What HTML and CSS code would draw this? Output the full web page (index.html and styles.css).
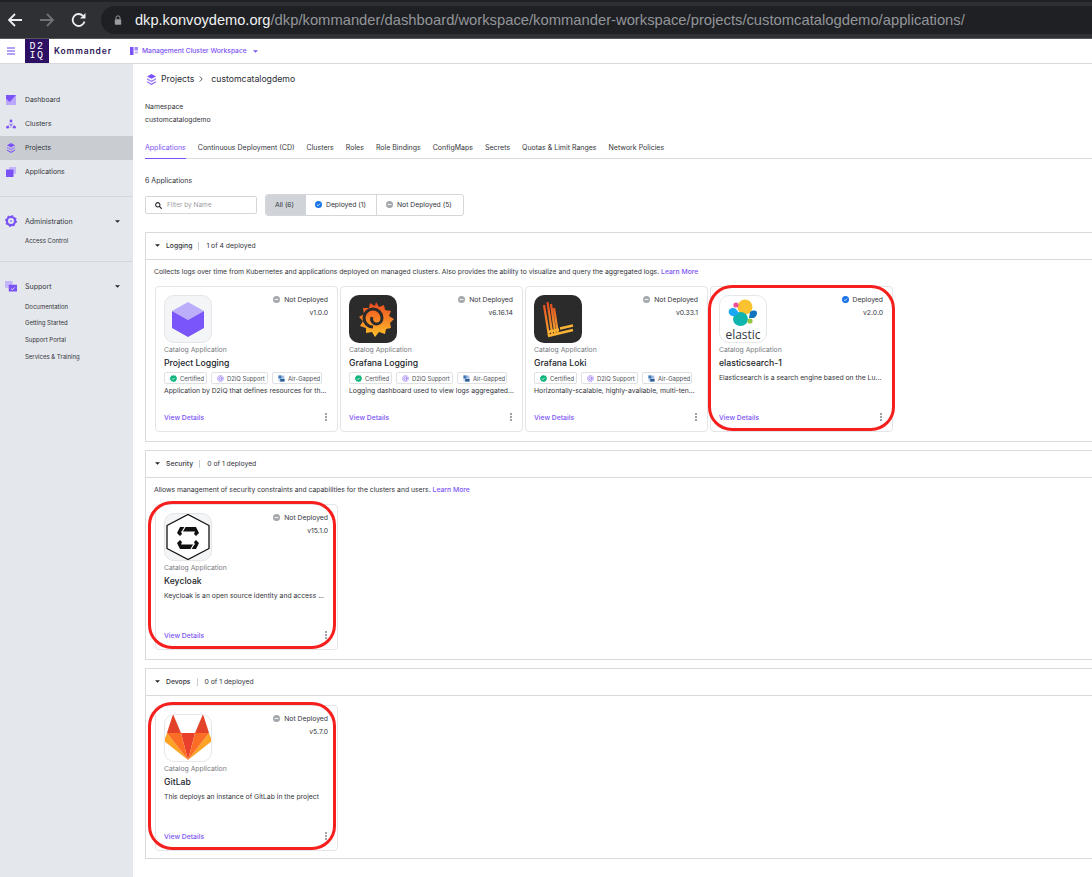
FILE: index.html
```html
<!DOCTYPE html>
<html lang="en">
<head>
<meta charset="utf-8">
<title>Kommander</title>
<link rel="stylesheet" href="styles.css">
</head>
<body>
<svg class="defs" width="0" height="0" aria-hidden="true">
  <symbol id="st-off" viewBox="0 0 16 16"><circle cx="8" cy="8" r="8" fill="#a3a6ab"/><rect x="3.5" y="6.6" width="9" height="2.8" fill="#e9eaec"/></symbol>
  <symbol id="st-on" viewBox="0 0 16 16"><circle cx="8" cy="8" r="8" fill="#1b74e8"/><path d="M4.5 8.4l2.5 2.4 4.6-5" fill="none" stroke="#fff" stroke-width="1.8"/></symbol>
  <symbol id="b-cert" viewBox="0 0 16 16"><path d="M8 0l2.300 1.500 2.800-.1 1 2.600 2 1.900L15 8.500l.6 2.600-2.200 1.600-1 2.600-2.800-.2L8 16l-2.300-1.500-2.600.1-1-2.500L0 10.500.8 8 0 5.400 2.100 4l1-2.600 2.600.1z" fill="#0cb37a"/><path d="M4.800 8.200l2.200 2.200 4-4.200" fill="none" stroke="#fff" stroke-width="1.800"/></symbol>
  <symbol id="b-sup" viewBox="0 0 16 16"><circle cx="8" cy="8" r="7" fill="none" stroke="#a78bfa" stroke-width="2" stroke-dasharray="2.500 1"/><circle cx="8" cy="8" r="4" fill="none" stroke="#7b52f5" stroke-width="1.700"/><path d="M8 8h4" stroke="#7b52f5" stroke-width="1.500"/></symbol>
  <symbol id="b-air" viewBox="0 0 16 16"><rect x="1" y="1" width="14" height="14" fill="#c6d6ee"/><rect x="1" y="1" width="7" height="7" fill="#3f78b5"/><path d="M5 15V9h10v6z" fill="#2b5d97"/><rect x="9" y="3" width="4" height="4" fill="#8fb2de"/></symbol>
  <symbol id="kebab" viewBox="0 0 4 8"><circle cx="2" cy="1" r=".8" fill="#2b2d33"/><circle cx="2" cy="4" r=".8" fill="#2b2d33"/><circle cx="2" cy="7" r=".8" fill="#2b2d33"/></symbol>
  <symbol id="caret" viewBox="0 0 8 4"><path d="M0 0h8L4 4z" fill="#22242a"/></symbol>
  <symbol id="layers" viewBox="0 0 16 16"><path d="M8 0l6.500 3.500L8 7 1.500 3.500z" fill="#7b52f5"/><path d="M1.500 5.800L8 9.300l6.500-3.500v2.700L8 12 1.500 8.500z" fill="#a58bf7"/><path d="M1.500 10.500L8 14l6.500-3.500V12L8 16l-6.500-4z" fill="#7b52f5"/></symbol>
</svg>

<div class="browser">
  <div class="browser-top"></div>
  <div class="browser-row">
    <svg class="nav-ico" viewBox="0 0 16 16"><path d="M15 8H2M8 2L2 8l6 6" fill="none" stroke="#eceff1" stroke-width="1.800"/></svg>
    <svg class="nav-ico" viewBox="0 0 16 16"><path d="M1 8h13M8 2l6 6-6 6" fill="none" stroke="#6f7276" stroke-width="1.800"/></svg>
    <svg class="nav-ico" viewBox="0 0 16 16"><path d="M13.500 9.500A6 6 0 1 1 12 3.800" fill="none" stroke="#eceff1" stroke-width="1.800"/><path d="M14.500 1v5.500H9z" fill="#eceff1"/></svg>
    <div class="url">
      <svg class="lock" viewBox="0 0 10 12"><path d="M2.500 5V3.300a2.500 2.500 0 0 1 5 0V5" fill="none" stroke="#9a9ca0" stroke-width="1.200"/><rect x="1" y="5" width="8" height="7" rx="1" fill="#9a9ca0"/></svg>
      <span class="url-host">dkp.konvoydemo.org</span><span class="url-path">/dkp/kommander/dashboard/workspace/kommander-workspace/projects/customcatalogdemo/applications/</span>
    </div>
  </div>
</div>

<header class="topbar">
  <svg class="burger" viewBox="0 0 8 8"><path d="M0 1h8M0 4h8M0 7h8" stroke="#9a83f5" stroke-width="1.300"/></svg>
  <div class="logo"><span>D2</span><span>IQ</span></div>
  <span class="brand">Kommander</span>
  <svg class="ws-ico" viewBox="0 0 8 8"><rect width="3.500" height="8" fill="#7b52f5"/><rect x="4.500" width="3.500" height="3.500" fill="#a58bf7"/><rect x="4.500" y="4.500" width="3.500" height="2" fill="#c4b5fa"/></svg>
  <span class="ws-name">Management Cluster Workspace</span>
  <svg class="ws-caret" viewBox="0 0 8 4"><path d="M0 0h8L4 4z" fill="#7b52f5"/></svg>
</header>

<div class="shell">
  <nav class="side">
    <div class="side-group">
      <a class="side-item"><svg class="side-ico" viewBox="0 0 16 16"><rect width="16" height="16" fill="#b9a8f9"/><path d="M0 0h16L6 11 0 6z" fill="#7b52f5"/></svg>Dashboard</a>
      <a class="side-item"><svg class="side-ico" viewBox="0 0 16 16"><path d="M8 3L3 13M8 3l5 10M3 13h10" stroke="#a58bf7" stroke-width="1"/><circle cx="8" cy="3" r="2.300" fill="#7b52f5"/><circle cx="2.500" cy="13" r="2.300" fill="#7b52f5"/><circle cx="13.500" cy="13" r="2.300" fill="#7b52f5"/><circle cx="8" cy="9.500" r="1.500" fill="#7b52f5"/></svg>Clusters</a>
      <a class="side-item is-active"><svg class="side-ico"><use href="#layers"/></svg>Projects</a>
      <a class="side-item"><svg class="side-ico" viewBox="0 0 16 16"><rect x="5" y="0" width="11" height="11" fill="#c4b5fa"/><rect x="0" y="4" width="12" height="12" fill="#7b52f5"/></svg>Applications</a>
    </div>
    <div class="side-group side-sub">
      <div class="side-head"><svg class="side-ico" viewBox="0 0 16 16"><circle cx="8" cy="8" r="5.500" fill="none" stroke="#7b52f5" stroke-width="3"/><circle cx="8" cy="8" r="7.200" fill="none" stroke="#7b52f5" stroke-width="1.600" stroke-dasharray="2.200 3.450"/><circle cx="8" cy="8" r="1.500" fill="#a58bf7"/></svg><span>Administration</span><svg class="side-caret"><use href="#caret"/></svg></div>
      <a class="side-link">Access Control</a>
    </div>
    <div class="side-group side-sub side-sup">
      <div class="side-head"><svg class="side-ico" viewBox="0 0 16 16"><rect x="0" y="0" width="10" height="9" fill="#c4b5fa"/><rect x="5" y="5" width="11" height="9" fill="#7b52f5"/><path d="M8 10l2 1.500 3-3" stroke="#fff" fill="none"/></svg><span>Support</span><svg class="side-caret"><use href="#caret"/></svg></div>
      <a class="side-link">Documentation</a>
      <a class="side-link">Getting Started</a>
      <a class="side-link">Support Portal</a>
      <a class="side-link">Services &amp; Training</a>
    </div>
  </nav>

  <main class="main">
    <div class="crumb">
      <svg class="crumb-ico"><use href="#layers"/></svg>
      <span>Projects</span>
      <svg class="crumb-sep" viewBox="0 0 4 6"><path d="M.8.500L3.200 3 .8 5.500" fill="none" stroke="#2b2d33" stroke-width=".8"/></svg>
      <span>customcatalogdemo</span>
    </div>
    <div class="ns">
      <div>Namespace</div>
      <div>customcatalogdemo</div>
    </div>
    <div class="tabs">
      <a class="tab is-active">Applications</a>
      <a class="tab">Continuous Deployment (CD)</a>
      <a class="tab">Clusters</a>
      <a class="tab">Roles</a>
      <a class="tab">Role Bindings</a>
      <a class="tab">ConfigMaps</a>
      <a class="tab">Secrets</a>
      <a class="tab">Quotas &amp; Limit Ranges</a>
      <a class="tab">Network Policies</a>
    </div>
    <div class="count">6 Applications</div>
    <div class="filters">
      <div class="search">
        <svg class="search-ico" viewBox="0 0 8 8"><circle cx="3.200" cy="3.200" r="2.500" fill="none" stroke="#22242a" stroke-width="1.200"/><path d="M5 5l2.700 2.700" stroke="#22242a" stroke-width="1.300"/></svg>
        <span>Filter by Name</span>
      </div>
      <div class="seg">
        <div class="seg-item seg-all">All (6)</div>
        <div class="seg-item seg-dep"><svg class="st"><use href="#st-on"/></svg>Deployed (1)</div>
        <div class="seg-item seg-not"><svg class="st"><use href="#st-off"/></svg>Not Deployed (5)</div>
      </div>
    </div>

    <section class="group group-log">
      <div class="group-head"><svg class="g-caret"><use href="#caret"/></svg><b>Logging</b><i class="g-sep"></i><span>1 of 4 deployed</span></div>
      <div class="group-body">
        <p class="g-desc">Collects logs over time from Kubernetes and applications deployed on managed clusters. Also provides the ability to visualize and query the aggregated logs. <a class="link">Learn More</a></p>
        <div class="cards">
          <article class="card">
            <div class="card-top">
              <div class="app-ico ico-light"><svg viewBox="0 0 48 48"><path d="M24 7l16 9-16 9-16-9z" fill="#bdaefa"/><path d="M8 16l16 9 16-9v17l-16 9-16-9z" fill="#7a55fa"/></svg></div>
              <div class="card-meta"><div class="status"><svg class="st"><use href="#st-off"/></svg>Not Deployed</div><div class="ver">v1.0.0</div></div>
            </div>
            <div class="cat">Catalog Application</div>
            <h3 class="name">Project Logging</h3>
            <div class="badges"><span class="badge b1"><svg class="b-ico"><use href="#b-cert"/></svg>Certified</span><span class="badge b2"><svg class="b-ico"><use href="#b-sup"/></svg>D2iQ Support</span><span class="badge b3"><svg class="b-ico"><use href="#b-air"/></svg>Air-Gapped</span></div>
            <p class="desc">Application by D2iQ that defines resources for th...</p>
            <div class="card-foot"><a class="link">View Details</a><svg class="kebab"><use href="#kebab"/></svg></div>
          </article>
          <article class="card">
            <div class="card-top">
              <div class="app-ico ico-dark"><svg viewBox="0 0 48 48"><defs><linearGradient id="gf" x1="0" y1="1" x2="0" y2="0"><stop offset="0" stop-color="#fcc12a"/><stop offset="1" stop-color="#f0471f"/></linearGradient></defs><path d="M27 7l3 5 5-2 1 5 6 1-2 5 5 3-4 4 1 5-5 1-1 5-6-2-4 5-3-5-6 1 0-5-6-2 3-5-4-4 5-3-1-6 6 0 1-5 5 3z" fill="url(#gf)"/><path d="M24 32a9 9 0 1 1 9-9c0 3.500-2.500 6-5.500 6a5 5 0 0 1-4.500-7" fill="none" stroke="#2b2b2b" stroke-width="3"/></svg></div>
              <div class="card-meta"><div class="status"><svg class="st"><use href="#st-off"/></svg>Not Deployed</div><div class="ver">v6.16.14</div></div>
            </div>
            <div class="cat">Catalog Application</div>
            <h3 class="name">Grafana Logging</h3>
            <div class="badges"><span class="badge b1"><svg class="b-ico"><use href="#b-cert"/></svg>Certified</span><span class="badge b2"><svg class="b-ico"><use href="#b-sup"/></svg>D2iQ Support</span><span class="badge b3"><svg class="b-ico"><use href="#b-air"/></svg>Air-Gapped</span></div>
            <p class="desc">Logging dashboard used to view logs aggregated...</p>
            <div class="card-foot"><a class="link">View Details</a><svg class="kebab"><use href="#kebab"/></svg></div>
          </article>
          <article class="card">
            <div class="card-top">
              <div class="app-ico ico-dark"><svg viewBox="0 0 48 48"><defs><linearGradient id="lk" gradientUnits="userSpaceOnUse" x1="0" y1="7" x2="0" y2="42"><stop offset="0" stop-color="#e4491f"/><stop offset="1" stop-color="#f9b233"/></linearGradient></defs><path d="M10 10l5 31M13.500 7l5 34M17 9l4.500 31M20 13l4 26" stroke="url(#lk)" stroke-width="2.200" fill="none"/><path d="M14 41l25-6M14 37l11-2.500M26 33.500l13-3" stroke="#f9b233" stroke-width="2.600" fill="none"/></svg></div>
              <div class="card-meta"><div class="status"><svg class="st"><use href="#st-off"/></svg>Not Deployed</div><div class="ver">v0.33.1</div></div>
            </div>
            <div class="cat">Catalog Application</div>
            <h3 class="name">Grafana Loki</h3>
            <div class="badges"><span class="badge b1"><svg class="b-ico"><use href="#b-cert"/></svg>Certified</span><span class="badge b2"><svg class="b-ico"><use href="#b-sup"/></svg>D2iQ Support</span><span class="badge b3"><svg class="b-ico"><use href="#b-air"/></svg>Air-Gapped</span></div>
            <p class="desc">Horizontally-scalable, highly-available, multi-ten...</p>
            <div class="card-foot"><a class="link">View Details</a><svg class="kebab"><use href="#kebab"/></svg></div>
          </article>
          <article class="card card-plain">
            <div class="card-top">
              <div class="app-ico ico-white ico-elastic"><svg class="el-mark" viewBox="0 0 48 32"><ellipse cx="26" cy="12" rx="7.500" ry="7.500" fill="#f9c22e"/><ellipse cx="21.500" cy="24" rx="7.500" ry="7" fill="#0fb5ad"/><path d="M10 15c2-2.500 5-2.500 7-1l3 4-4 3h-3c-3-1-4-3.500-3-6z" fill="#1ba9f5"/><path d="M31 17c3-2 7-2 7 1 0 3-2.500 5.500-5 5h-3z" fill="#0e74bd"/><circle cx="17" cy="10" r="2.600" fill="#ee5097"/><circle cx="31" cy="26" r="2.600" fill="#93c83e"/></svg><span class="el-text">elastic</span></div>
              <div class="card-meta"><div class="status"><svg class="st"><use href="#st-on"/></svg>Deployed</div><div class="ver">v2.0.0</div></div>
            </div>
            <div class="cat">Catalog Application</div>
            <h3 class="name">elasticsearch-1</h3>
            <p class="desc">Elasticsearch is a search engine based on the Lu...</p>
            <div class="card-foot"><a class="link">View Details</a><svg class="kebab"><use href="#kebab"/></svg></div>
            <div class="ring ring-elastic"></div>
          </article>
        </div>
      </div>
    </section>

    <section class="group group-sec">
      <div class="group-head"><svg class="g-caret"><use href="#caret"/></svg><b>Security</b><i class="g-sep"></i><span>0 of 1 deployed</span></div>
      <div class="group-body">
        <p class="g-desc">Allows management of security constraints and capabilities for the clusters and users. <a class="link">Learn More</a></p>
        <div class="cards">
          <article class="card card-plain">
            <div class="card-top">
              <div class="app-ico ico-light"><svg viewBox="0 0 48 48"><path d="M24 1.500L45 12.500v23L24 46.500 3 35.500v-23z" fill="#fff" stroke="#111" stroke-width="1.300" stroke-linejoin="round"/><path d="M16 14h16l3 6-3 3-2-2 1-2.500H17l1 2.500-2 2-3-3z" fill="#111"/><path d="M32 36H16l-3-6 3-3 2 2-1 2.500h14l-1-2.500 2-2 3 3z" fill="#111"/><path d="M21 14l-3 5M30 31l-3 5" stroke="#fff" stroke-width="1.200"/></svg></div>
              <div class="card-meta"><div class="status"><svg class="st"><use href="#st-off"/></svg>Not Deployed</div><div class="ver">v15.1.0</div></div>
            </div>
            <div class="cat">Catalog Application</div>
            <h3 class="name">Keycloak</h3>
            <p class="desc">Keycloak is an open source identity and access ...</p>
            <div class="card-foot"><a class="link">View Details</a><svg class="kebab"><use href="#kebab"/></svg></div>
            <div class="ring ring-left"></div>
          </article>
        </div>
      </div>
    </section>

    <section class="group group-dev">
      <div class="group-head"><svg class="g-caret"><use href="#caret"/></svg><b>Devops</b><i class="g-sep"></i><span>0 of 1 deployed</span></div>
      <div class="group-body">
        <div class="cards">
          <article class="card card-plain">
            <div class="card-top">
              <div class="app-ico ico-white"><svg viewBox="0 0 48 48"><path d="M9 0l8 19H3z" fill="#e24329"/><path d="M39 0l6 19H31z" fill="#e24329"/><path d="M17 19h14l-7 27z" fill="#e8402a"/><path d="M3 19L0 27l24 19z" fill="#fca326"/><path d="M45 19l3 8-24 19z" fill="#fca326"/><path d="M3 19h14l7 27z" fill="#fc6d26"/><path d="M45 19H31l-7 27z" fill="#fc6d26"/></svg></div>
              <div class="card-meta"><div class="status"><svg class="st"><use href="#st-off"/></svg>Not Deployed</div><div class="ver">v5.7.0</div></div>
            </div>
            <div class="cat">Catalog Application</div>
            <h3 class="name">GitLab</h3>
            <p class="desc">This deploys an instance of GitLab in the project</p>
            <div class="card-foot"><a class="link">View Details</a><svg class="kebab"><use href="#kebab"/></svg></div>
            <div class="ring ring-left"></div>
          </article>
        </div>
      </div>
    </section>
  </main>
</div>
</body>
</html>
```
FILE: styles.css
```css
* { box-sizing: border-box; }
html, body { margin: 0; height: 877px; overflow: hidden; }
body { font-family: Inter, "Noto Sans", sans-serif; font-size: 7px; color: #33353b; background: #fff; display: flex; flex-direction: column; }
.defs { position: absolute; }
a { color: inherit; text-decoration: none; }
p, h3 { margin: 0; }

.browser { height: 39px; flex: none; background: #2f3033; border-bottom: 1px solid #55575b; }
.browser-top { height: 2px; background: #202124; }
.browser-row { display: flex; align-items: center; height: 36px; padding-left: 7px; }
.nav-ico { width: 16px; height: 16px; margin-right: 16px; flex: none; }
.nav-ico:nth-child(3) { margin-right: 14px; }
.url { flex: 1; height: 28px; background: #1f2023; border-radius: 14px 0 0 14px; display: flex; align-items: center; padding-left: 13px; font-family: "Liberation Sans", sans-serif; font-size: 14.780px; white-space: nowrap; overflow: hidden; }
.lock { width: 8px; height: 10px; margin-right: 13px; flex: none; }
.url-host { color: #eef0f2; font-size: 14.600px; }
.url-path { color: #92959a; }

.topbar { height: 25px; flex: none; background: #fff; border-bottom: 1px solid #d8dadd; display: flex; align-items: center; padding-left: 7px; }
.burger { width: 8px; height: 8px; flex: none; margin-right: 10px; }
.logo { width: 24px; height: 24px; background: #2d0f63; color: #fff; font-family: "Liberation Mono", monospace; font-size: 10px; line-height: 9.500px; letter-spacing: 1.500px; display: flex; flex-direction: column; align-items: center; justify-content: center; flex: none; margin-right: 5px; }
.brand { font-size: 8.500px; font-weight: 600; letter-spacing: .9px; color: #2a1458; width: 76px; white-space: nowrap; }
.ws-ico { width: 8px; height: 8px; margin-right: 4px; }
.ws-name { color: #7b52f5; font-size: 6.700px; font-weight: 500; margin-right: 6px; }
.ws-caret { width: 5px; height: 3px; }

.shell { flex: 1; display: flex; min-height: 0; }
.side { width: 133px; flex: none; background: #e4e7eb; padding-top: 24px; font-size: 6.500px; }
.side-group { padding-bottom: 12px; border-bottom: 1px solid #d3d6da; }
.side-group:last-child { border-bottom: 0; }
.side-item { display: flex; align-items: center; height: 24px; padding: 0 0 1px 6px; font-size: 6.800px; }
.side-ico { width: 13px; height: 13px; flex: none; margin-right: 6px; }
.side-item .side-ico { width: 10px; height: 10px; margin-right: 9px; }
.side-item.is-active { background: #c9cdd1; }
.side-sub { padding-top: 13px; padding-bottom: 12px; }
.side-sup { padding-top: 14px; }
.side-head { display: flex; align-items: center; height: 22px; padding-left: 5px; font-size: 7px; }
.side-head .side-ico { width: 12px; height: 12px; margin-right: 8px; }
.side-head span { flex: 1; }
.side-caret { width: 5px; height: 3px; margin-right: 13px; }
.side-link { display: flex; align-items: center; height: 16.700px; padding-left: 25px; font-size: 6px; }

.main { flex: 1; min-width: 0; padding: 7px 0 0 12px; }
.crumb { display: flex; align-items: center; height: 16px; font-size: 8.700px; color: #2b2d33; }
.crumb-ico { width: 11px; height: 11px; margin: 0 4px 0 1px; }
.crumb-sep { width: 4px; height: 6px; margin: 0 8px 0 5px; }
.ns { margin-top: 13px; font-size: 6.800px; line-height: 13px; }
.tabs { display: flex; gap: 12px; margin-top: 12px; height: 21px; border-bottom: 1px solid #d8dadd; }
.tab { height: 20px; line-height: 19px; font-size: 7px; white-space: nowrap; }
.tab.is-active { color: #7b52f5; border-bottom: 1px solid #7b52f5; height: 21px; }
.count { margin-top: 16px; line-height: 12px; font-size: 7px; }
.filters { display: flex; align-items: center; gap: 8px; margin-top: 7px; height: 22px; }
.search { width: 112px; height: 18px; border: 1px solid #d4d6da; border-radius: 2px; display: flex; align-items: center; padding-left: 9px; color: #9a9da3; font-size: 6.500px; }
.search-ico { width: 7px; height: 7px; margin-right: 5px; }
.seg { display: flex; height: 22px; border: 1px solid #d4d6da; border-radius: 3px; overflow: hidden; font-size: 6.800px; }
.seg-item { display: flex; align-items: center; padding: 0 0 1px 9px; }
.seg-all { width: 40px; background: #d0d4d9; }
.seg-dep { width: 71px; border-right: 1px solid #d4d6da; }
.seg-not { width: 86px; }
.st { width: 7px; height: 7px; margin-right: 4px; flex: none; }

.group { width: 960px; border: 1px solid #d8dadd; }
.group-log { margin-top: 16px; height: 210px; }
.group-sec { margin-top: 8px; height: 210px; }
.group-dev { margin-top: 8px; height: 191px; }
.group-head { height: 27px; display: flex; align-items: center; padding: 0 0 1px 9px; border-bottom: 1px solid #d8dadd; font-size: 6.800px; }
.group-head b { font-weight: 500; }
.g-caret { width: 5px; height: 3px; margin-right: 6px; }
.g-sep { width: 1px; height: 8px; background: #c9ccd0; margin: 0 7px 0 6px; }
.group-body { padding: 0 9px; }
.g-desc { line-height: 12px; padding-top: 6px; height: 26px; margin-left: -1px; font-size: 6.800px; white-space: nowrap; }
.link { color: #7b52f5; font-weight: 500; }
.group-dev .group-body { padding-top: 9px; }

.cards { display: flex; gap: 2px; }
.card { position: relative; width: 183px; height: 146px; flex: none; border: 1px solid #e3e5e8; border-radius: 4px; padding: 8px 8px 9px 8px; display: flex; flex-direction: column; }
.card-top { display: flex; justify-content: space-between; height: 48px; }
.app-ico { width: 48px; height: 48px; border-radius: 10px; overflow: hidden; flex: none; }
.app-ico svg { display: block; width: 48px; height: 48px; }
.ico-light { background: #f4f5f7; border: 1px solid #e3e5e8; }
.ico-light svg { margin: -1px; }
.ico-dark { background: #2b2b2b; }
.ico-white { background: #fff; border: 1px solid #e6e7ea; }
.ico-white svg { margin: -1px; }
.ico-elastic { display: flex; flex-direction: column; align-items: center; }
.app-ico .el-mark { width: 48px; height: 32px; flex: none; margin: -1px -1px 0; }
.el-text { font-size: 12px; line-height: 14px; color: #343741; font-family: "Open Sans", sans-serif; margin-top: 1px; }
.card-meta { text-align: right; padding-right: 1px; font-size: 6.800px; }
.status { display: flex; align-items: center; justify-content: flex-end; height: 10px; margin-top: -1px; }
.ver { margin-top: 4px; line-height: 10px; }
.cat { margin-top: 1px; line-height: 11px; color: #777a80; font-size: 6.800px; }
.name { font-size: 8.700px; font-weight: 500; line-height: 14px; margin-top: 1px; color: #22242a; }
.badges { display: flex; gap: 4px; margin-top: 2px; height: 12px; }
.badge { display: flex; align-items: center; height: 12px; border: 1px solid #dfe1e4; border-radius: 2px; padding-left: 5px; font-size: 5.900px; color: #50535a; white-space: nowrap; }
.b1 { width: 43px; }
.b2 { width: 57px; }
.b3 { width: 50px; }
.b-ico { width: 7px; height: 7px; margin-right: 3px; flex: none; }
.desc { margin-top: 1px; line-height: 11px; font-size: 6.800px; white-space: nowrap; }
.card-plain .desc { margin-top: 2px; }
.card-foot { margin-top: auto; display: flex; justify-content: space-between; align-items: center; height: 10px; font-size: 6.800px; }
.kebab { width: 4px; height: 8px; margin-right: 1px; }

.ring { position: absolute; border: 3px solid #f5201e; border-radius: 24px; pointer-events: none; }
.ring-elastic { top: -2px; left: -3px; width: 187px; height: 146px; }
.ring-left { top: -4px; left: -8px; width: 188px; height: 148px; }
```
